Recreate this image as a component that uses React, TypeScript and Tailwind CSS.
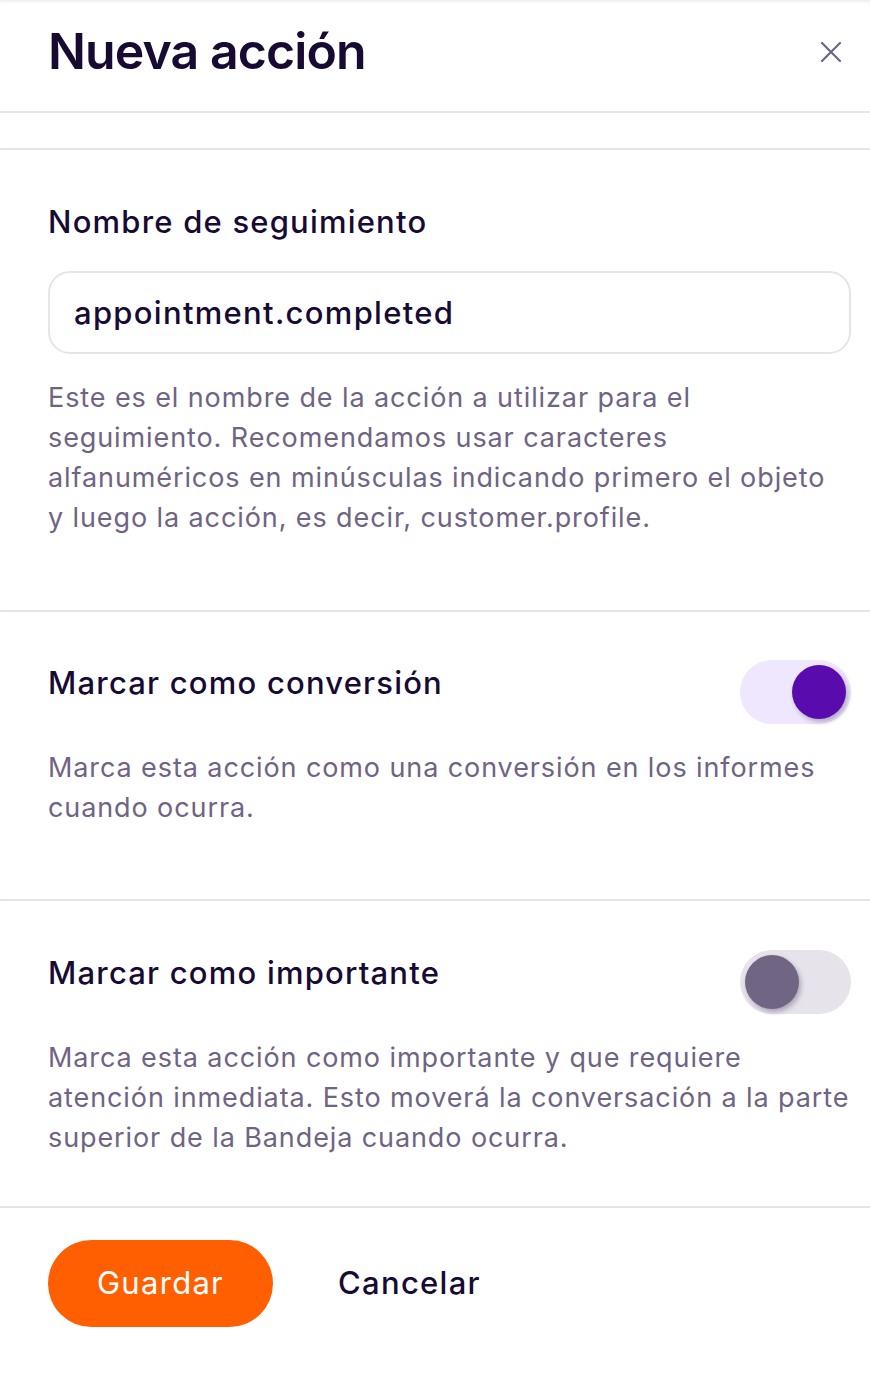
import React, { useState } from 'react';

const font = { fontFamily: 'Inter, "Noto Sans", sans-serif' };

const Toggle: React.FC<{ on: boolean; onChange: () => void }> = ({ on, onChange }) => (
  <button
    onClick={onChange}
    className={`flex h-[64px] w-[111px] shrink-0 items-center rounded-full px-[5px] ${
      on ? 'justify-end bg-[#efe7fd]' : 'justify-start bg-[#e6e3ea]'
    }`}
  >
    <span
      className={`block h-[54px] w-[54px] rounded-full shadow-[2px_3px_5px_rgba(40,20,70,0.3)] ${
        on ? 'bg-[#5a0bad]' : 'bg-[#716584]'
      }`}
    />
  </button>
);

const App: React.FC = () => {
  const [name, setName] = useState('appointment.completed');
  const [conversion, setConversion] = useState(true);
  const [important, setImportant] = useState(false);

  return (
    <div
      style={font}
      className="min-h-[1376px] w-full bg-white text-[#170b33] shadow-[inset_0_4px_4px_-3px_rgba(0,0,0,0.1)]"
    >
      {/* cabecera */}
      <div className="flex h-[113px] items-center justify-between border-b-2 border-[#e6e4ea] pl-[48px] pr-[28px]">
        <h1 className="pb-[8px] text-[50px] font-semibold tracking-[-0.9px]">Nueva acción</h1>
        <button className="mb-[8px] flex h-[22px] w-[22px] items-center justify-center text-[#716584]">
          <svg width="22" height="22" viewBox="0 0 22 22" fill="none" stroke="currentColor" strokeWidth="2.2" strokeLinecap="round">
            <path d="M2 2L20 20M20 2L2 20" />
          </svg>
        </button>
      </div>
      <div className="h-[37px] border-b-2 border-[#e6e4ea]" />

      {/* nombre */}
      <div className="border-b-2 border-[#e6e4ea] pb-[72px] pl-[48px] pr-[19px] pt-[50px]">
        <label className="block h-[44px] text-[31px] font-medium leading-[44px] tracking-[1.2px]">
          Nombre de seguimiento
        </label>
        <input
          value={name}
          onChange={(e) => setName(e.target.value)}
          className="mt-[27px] h-[83px] w-full rounded-[22px] border-2 border-[#e6e4ea] px-[24px] text-[31px] font-medium tracking-[1.3px] text-[#170b33] outline-none"
        />
        <p className="mt-[24px] max-w-[790px] text-[27px] leading-[40px] tracking-[0.9px] text-[#6f6483]">
          Este es el nombre de la acción a utilizar para el seguimiento. Recomendamos usar caracteres alfanuméricos en
          minúsculas indicando primero el objeto y luego la acción, es decir, customer.profile.
        </p>
      </div>

      {/* conversión */}
      <div className="border-b-2 border-[#e6e4ea] pb-[71px] pl-[48px] pr-[19px] pt-[48px]">
        <div className="flex items-start justify-between">
          <span className="mt-[1px] h-[44px] text-[31px] font-medium leading-[44px] tracking-[1.2px]">
            Marcar como conversión
          </span>
          <Toggle on={conversion} onChange={() => setConversion(!conversion)} />
        </div>
        <p className="mt-[24px] text-[27px] leading-[40px] tracking-[0.9px] text-[#6f6483]">
          Marca esta acción como una conversión en los informes cuando ocurra.
        </p>
      </div>

      {/* importante */}
      <div className="border-b-2 border-[#e6e4ea] pb-[48px] pl-[48px] pr-[19px] pt-[49px]">
        <div className="flex items-start justify-between">
          <span className="mt-[1px] h-[44px] text-[31px] font-medium leading-[44px] tracking-[1.2px]">
            Marcar como importante
          </span>
          <Toggle on={important} onChange={() => setImportant(!important)} />
        </div>
        <p className="mt-[24px] text-[27px] leading-[40px] tracking-[0.9px] text-[#6f6483]">
          Marca esta acción como importante y que requiere atención inmediata. Esto moverá la conversación a la parte
          superior de la Bandeja cuando ocurra.
        </p>
      </div>

      {/* acciones */}
      <div className="flex items-center pl-[48px] pt-[32px]">
        <button className="h-[87px] w-[225px] rounded-full bg-[#ff5f00] text-[31px] tracking-[1.3px] text-white">
          Guardar
        </button>
        <button className="ml-[65px] text-[31px] font-medium tracking-[1.3px]">Cancelar</button>
      </div>
    </div>
  );
};

export default App;
